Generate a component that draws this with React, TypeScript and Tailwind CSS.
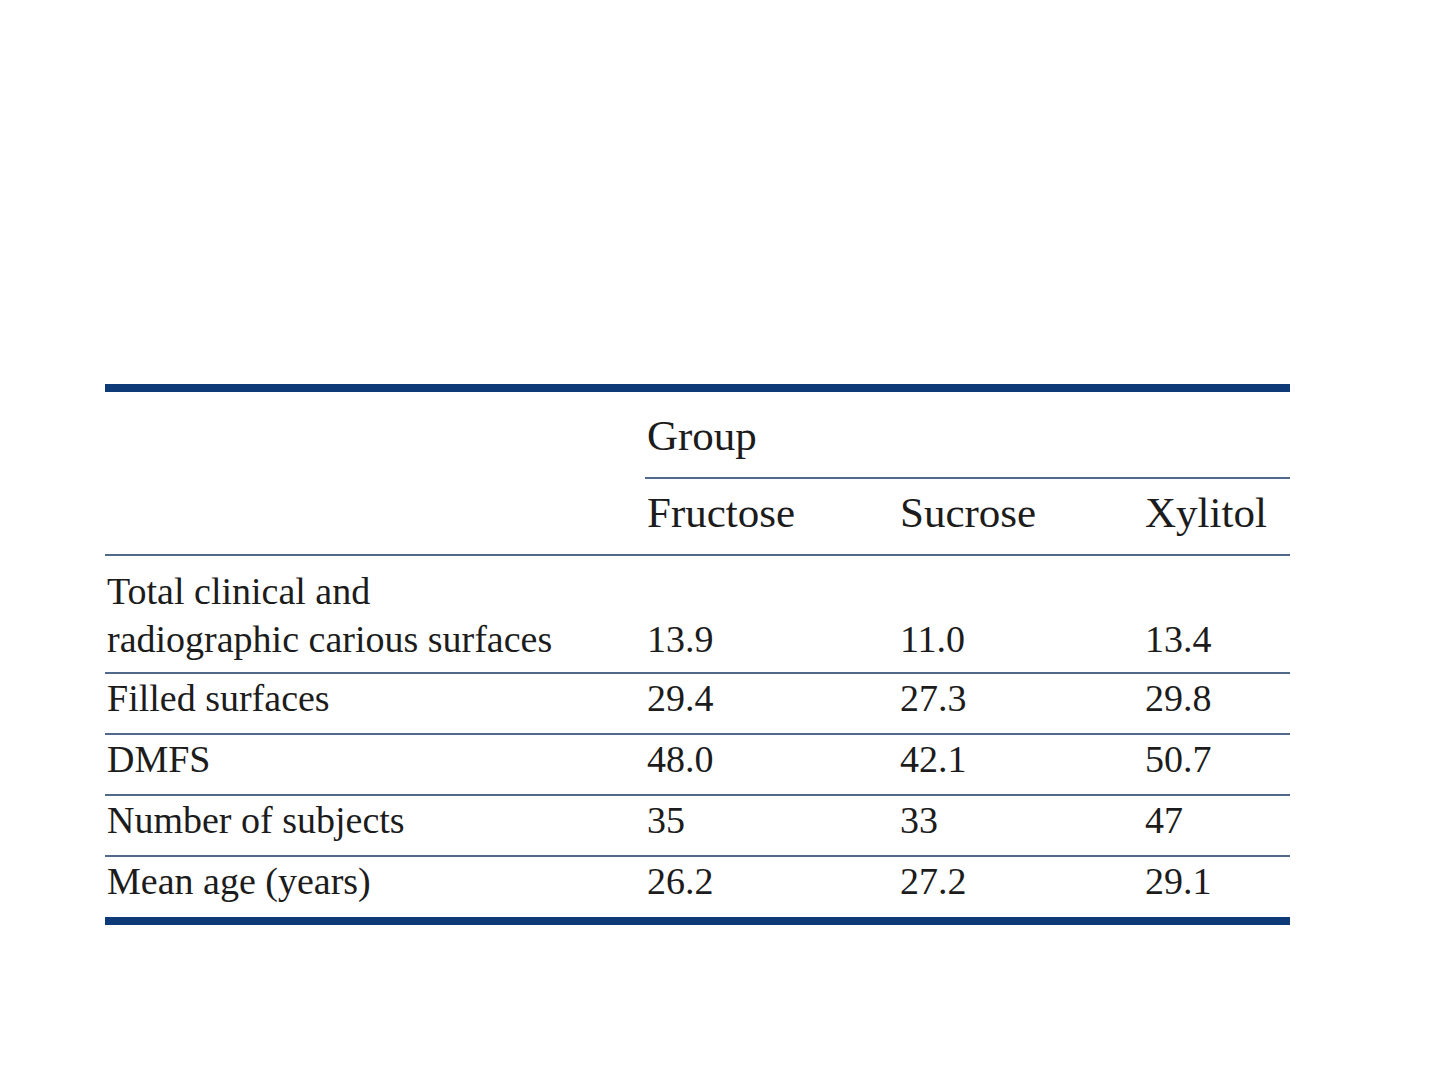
const rows = [
  { label: ["Total clinical and", "radiographic carious surfaces"], values: ["13.9", "11.0", "13.4"] },
  { label: ["Filled surfaces"], values: ["29.4", "27.3", "29.8"] },
  { label: ["DMFS"], values: ["48.0", "42.1", "50.7"] },
  { label: ["Number of subjects"], values: ["35", "33", "47"] },
  { label: ["Mean age (years)"], values: ["26.2", "27.2", "29.1"] },
];

const groups = ["Fructose", "Sucrose", "Xylitol"];

const App = () => {
  return (
    <div className="w-[1437px] h-[1077px] bg-white text-[#1c1c1c] font-['Liberation_Serif',serif]">
      <div className="pt-[384px] pl-[105px]">
        <div className="w-[1185px] border-t-[8px] border-b-[8px] border-[#0e3b78]">
          {/* header */}
          <div className="grid grid-cols-[540px_645px] pt-[18px]">
            <div />
            <div className="text-[43px] leading-[52px] pl-[2px] pb-[15px] border-b-2 border-[#51698a]">
              Group
            </div>
          </div>
          <div className="grid grid-cols-[540px_253px_245px_147px] pt-[8px] pb-[15px] border-b-2 border-[#51698a] text-[43px] leading-[52px]">
            <div />
            {groups.map((g) => (
              <div key={g} className="pl-[2px]">{g}</div>
            ))}
          </div>
          {/* body */}
          {rows.map((row, i) => (
            <div
              key={i}
              className={
                i === 0
                  ? "grid grid-cols-[540px_253px_245px_147px] pt-[11px] pb-[9px] text-[38px] leading-[48px]"
                  : "grid grid-cols-[540px_253px_245px_147px] pb-[11px] border-t-2 border-[#51698a] text-[38px] leading-[48px] last:pb-[12px]"
              }
            >
              <div className="pl-[2px]">
                {row.label.map((l) => (
                  <div key={l}>{l}</div>
                ))}
              </div>
              {row.values.map((v, j) => (
                <div key={j} className="pl-[2px] flex items-end">{v}</div>
              ))}
            </div>
          ))}
        </div>
      </div>
    </div>
  );
};

export default App;
